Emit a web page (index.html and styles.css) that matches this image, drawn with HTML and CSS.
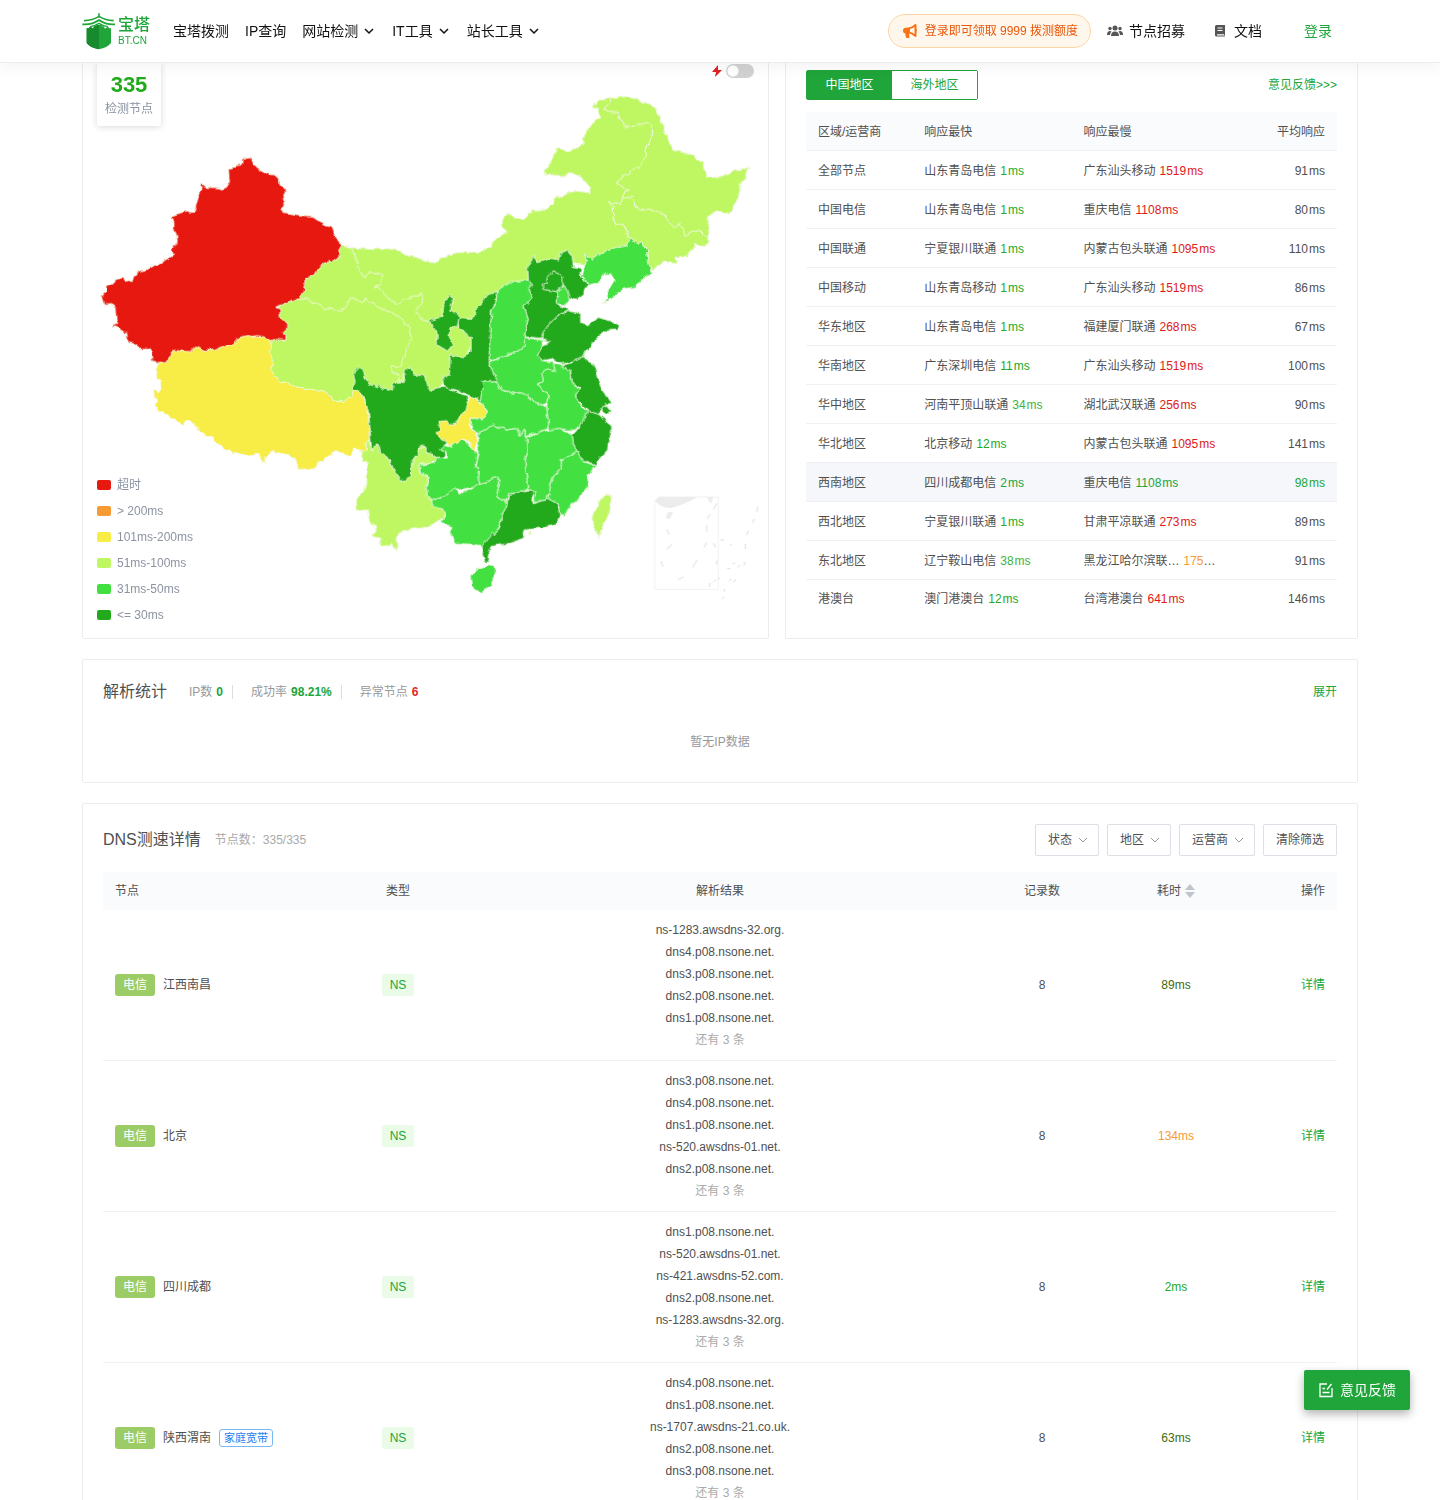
FILE: index.html
```html
<!DOCTYPE html>
<html lang="zh-CN">
<head>
<meta charset="utf-8">
<meta name="viewport" content="width=device-width, initial-scale=1">
<title>宝塔拨测 - DNS测速</title>
<link rel="stylesheet" href="styles.css">
</head>
<body>
<header class="header">
  <div class="header-inner">
    <a class="logo" href="#" aria-label="宝塔">
      <svg width="34" height="37" viewBox="36 38 102 111">
        <path d="M50 84h7v-3h8v3h6v-6h8v-4h16v4h8v6h6v-3h8v3h6V128Q112 142 87 147Q60 142 50 128Z" fill="#20a53a"/>
        <path d="M50 84h7v-3h8v3h6v-6h8v-4h8V147Q60 142 50 128Z" fill="#178a2d"/>
        <path d="M87 39V52M42 61Q68 60 87 48Q106 60 131 61M37 72Q66 74 87 59Q108 74 135 72" fill="none" stroke="#20a53a" stroke-width="5"/>
        <path d="M60 79Q75 77 87 69Q99 77 114 79" fill="none" stroke="#20a53a" stroke-width="4"/>
      </svg>
      <span class="logo-text"><b>宝塔</b><small>BT.CN</small></span>
    </a>
    <nav class="nav">
      <a href="#">宝塔拨测</a>
      <a href="#">IP查询</a>
      <a href="#">网站检测<svg class="chev" viewBox="0 0 10 10"><path d="M1 3l4 4 4-4"/></svg></a>
      <a href="#">IT工具<svg class="chev" viewBox="0 0 10 10"><path d="M1 3l4 4 4-4"/></svg></a>
      <a href="#">站长工具<svg class="chev" viewBox="0 0 10 10"><path d="M1 3l4 4 4-4"/></svg></a>
    </nav>
    <div class="actions">
      <a class="promo" href="#">
        <svg width="14" height="14" viewBox="0 0 14 14" fill="#f97316"><path fill-rule="evenodd" d="M12 0q1.500 0 1.500 1v4q1 1 0 3v4q-.5 1.500-2 .5Q9 10 6 9.500l.5 3.500q0 1-1 1H4q-1 0-1.200-1L2.300 9.500Q0 9 0 7V6q0-2 2.500-2.200Q9 3.500 12 0M7 5v3q3 .4 4.500 2V3Q9.500 4.700 7 5"/></svg>
        登录即可领取 9999 拨测额度
      </a>
      <a class="action" href="#">
        <svg width="16" height="14" viewBox="0 0 16 14" fill="#555"><circle cx="8" cy="4" r="2.500"/><circle cx="3" cy="4.500" r="1.700"/><circle cx="13" cy="4.500" r="1.700"/><path d="M4 12q0-4.500 4-4.500t4 4.500ZM0 11q0-4 3-4 1 0 1.500.5Q3 9 3 11ZM16 11q0-4-3-4-1 0-1.500.5Q13 9 13 11Z"/></svg>
        节点招募
      </a>
      <a class="action docs" href="#">
        <svg width="12" height="14" viewBox="0 0 12 14"><path d="M2.500 1H11v9.500q-1 1 0 2H2.500Q1 12.500 1 11V2.500Q1 1 2.500 1" fill="#555"/><path d="M3.500 4h5M3.500 6.500h5M3 10.800h7" stroke="#fff" stroke-width="1.200"/></svg>
        文档
      </a>
      <a class="login" href="#">登录</a>
    </div>
  </div>
</header>

<main class="main">
  <div class="overview">
    <section class="panel map-panel">
      <div class="count"><strong>335</strong><span>检测节点</span></div>
      <label class="fast" aria-label="极速模式">
        <svg width="10" height="12" viewBox="0 0 10 12"><path d="M6 0L0 7h4L3 12 10 5H6Z" fill="#e02020"/></svg>
        <input type="checkbox">
      </label>
      <svg class="map" viewBox="291 270 1998 1536" role="img" aria-label="中国地区响应速度">
        <defs>
          <filter id="rough" x="-2%" y="-2%" width="104%" height="104%" color-interpolation-filters="sRGB">
            <feTurbulence type="fractalNoise" baseFrequency=".05" numOctaves="2" seed="4"/>
            <feDisplacementMap in="SourceGraphic" scale="15" xChannelSelector="R" yChannelSelector="G"/>
          </filter>
        </defs>
        <g class="land" filter="url(#rough)">
          <path class="l4" d="M1025 736L1053 742 1110 748 1160 745 1200 753 1210 765 1240 770 1280 782 1300 788 1320 777 1370 758 1440 755 1472 740 1490 717 1520 697 1503 670 1515 643 1532 643 1540 653 1573 655 1605 630 1635 628 1657 613 1665 593 1690 587 1695 580 1730 573 1770 578 1768 560 1755 545 1745 530 1710 517 1690 530 1675 523 1642 527 1634 515 1642 505 1670 445 1705 452 1732 440 1752 433 1750 415 1755 400 1775 370 1798 352 1792 325 1775 320 1802 297 1825 295 1880 286 1895 292 1920 303 1950 312 1970 330 1980 355 1992 390 2010 425 2015 450 2075 462 2095 480 2110 490 2112 510 2125 533 2170 530 2190 515 2225 507 2248 502 2238 520 2238 537 2220 550 2218 580 2205 610 2188 642 2150 632 2122 652 2128 685 2128 713 2125 730 2110 740 2088 730 2082 745 2060 768 2028 772 2033 795 2000 790 1988 782 1970 807 1957 817 1940 780 1890 750 1780 800 1710 790 1500 900 1440 1000 1380 1100 1300 1180 1200 1200 1080 1250 900 1200 700 1100 850 900 900 850 980 780Z"/>
          <g transform="translate(270 960)">
            <path class="l3" d="M205 131L197 150 201 170 210 180 215 205 205 218 190 208 192 228 202 238 198 260 208 275 235 285 275 315 283 302 300 302 348 350 368 350 376 365 400 385 420 390 430 403 440 398 470 409 510 402 520 432 528 410 548 395 600 405 622 430 624 448 670 447 685 430 738 392 780 410 795 383 815 398 832 393 836 360 842 353 838 310 830 265 820 230 806 214 790 210 785 228 770 235 765 245 750 240 740 245 727 240 722 228 700 210 685 215 650 206 615 200 600 190 570 185 555 170 544 148 549 130 540 100 545 70 545 62 505 20 300 40Z"/>
          </g>
          <g transform="translate(270 420)">
            <path class="l1" d="M457 52L470 55 485 52 484 64 491 72 505 85 510 94 524 101 534 97 545 104 553 104 565 115 571 133 585 147 586 158 581 165 585 181 576 203 582 217 604 221 633 226 663 228 682 240 707 257 722 260 728 265 738 294 755 316 747 330 747 355 739 355 721 368 717 364 703 371 685 387 674 407 647 412 640 457 630 470 628 477 600 487 575 495 558 502 570 508 571 533 585 545 595 558 577 575 579 584 588 584 588 601 552 598 545 602 527 593 505 587 470 590 438 600 428 614 405 616 370 631 340 631 327 621 317 618 300 635 280 634 252 631 241 640 233 667 205 671 186 662 183 638 177 625 150 625 130 611 114 607 110 580 94 569 64 558 83 550 78 540 75 500 65 494 45 495 36 463 47 455 48 437 65 432 78 418 98 413 101 424 128 420 139 396 165 394 190 378 240 352 249 346 245 322 262 307 258 280 252 265 250 238 238 229 292 212 300 217 320 216 313 198 336 134 348 142 385 143 395 147 415 137 418 122 415 90 420 84 444 80 455 68Z"/>
          </g>
          <g transform="translate(1020 1200)">
            <path class="l4" d="M95 155L108 130 118 140 140 170 180 243 213 230 215 185 232 160 238 140 258 138 255 155 287 165 288 180 275 190 240 192 238 218 265 228 258 262 268 300 280 315 315 335 312 352 290 365 270 380 245 385 225 385 200 392 175 400 172 420 175 450 160 445 155 430 140 438 122 435 120 415 98 410 107 380 88 365 82 330 47 333 50 315 45 300 75 270 80 250 82 190 70 180 65 155 78 150 80 125 90 120Z"/>
            <path class="l5" d="M238 195L285 190 288 172 318 172 318 155 300 148 305 135 330 140 345 128 358 115 380 125 385 135 403 155 412 155 405 200 420 205 415 250 405 262 350 270 340 285 305 290 270 302 262 285 258 262 268 228 240 218Z"/>
            <path class="l5" d="M270 302L305 290 325 282 345 265 355 283 395 265 420 247 440 245 465 232 480 240 470 290 485 300 500 298 500 320 485 345 480 375 460 400 430 438 400 433 350 430 332 405 335 380 300 368 315 352 315 335 300 325 280 320Z"/>
            <path class="l5" d="M415 100L440 90 460 75 480 82 500 90 530 85 540 105 550 85 557 110 570 120 565 150 555 185 560 230 567 270 540 270 530 280 505 282 500 298 485 300 470 290 480 240 465 232 440 245 415 250 418 205 405 200 415 155Z"/>
            <path class="l5" d="M560 115L600 95 628 85 665 85 680 95 700 105 700 130 712 155 680 170 660 180 665 205 640 230 630 265 622 295 600 302 580 305 582 280 567 270 560 230 555 185 565 150Z"/>
            <path class="l5" d="M712 155L730 185 768 195 745 225 742 265 720 290 700 310 670 350 660 345 655 315 622 295 630 265 640 230 665 205 660 180 680 170Z"/>
            <path class="l6" d="M740 30L775 42 790 55 815 75 815 95 805 130 803 150 770 185 768 195 745 185 730 185 712 155 700 130 697 105 715 85 730 60Z"/>
            <path class="l6" d="M505 282L530 280 540 270 585 275 575 300 580 308 600 302 622 295 650 310 662 345 645 375 600 385 555 390 550 415 520 425 500 432 450 440 445 462 452 485 435 487 427 460 430 435 455 405 480 380 485 345 500 320Z"/>
            <path class="l5" d="M412 508L440 498 460 495 470 512 455 540 455 555 425 577 397 563 394 530Z"/>
            <path class="l4" d="M785 290L800 280 815 288 810 320 803 350 790 380 780 400 778 418 772 395 757 370 757 345 775 310Z"/>
            <circle class="l4" cx="567" cy="399" r="4"/>
          </g>
          <g transform="translate(1020 690)">
            <path class="l6" d="M40 428L55 412 70 420 75 440 85 460 110 470 115 465 125 475 140 480 157 478 160 458 190 455 195 425 210 408 220 430 255 440 258 462 275 478 300 472 325 472 345 485 380 500 388 520 380 580 320 640 300 658 318 665 310 682 288 682 280 675 255 665 255 648 238 650 232 670 215 695 213 740 205 748 180 753 165 730 155 705 140 680 122 670 118 650 108 640 95 665 90 600 85 545 75 510 65 490 40 480 38 465 45 455Z"/>
            <path class="l5" d="M422 455L470 455 485 480 525 490 550 487 570 505 590 520 605 525 620 530 622 550 628 590 600 605 560 620 550 597 540 615 530 595 500 600 480 592 460 585 440 600 415 610 408 605 390 580 390 565 430 565 442 545 430 520 420 512Z"/>
            <path class="l3" d="M388 498L412 512 430 520 442 545 430 565 390 565 390 590 408 605 413 640 405 665 395 655 385 635 368 625 355 640 340 640 325 650 320 635 300 625 288 608 300 598 297 575 320 572 330 585 350 578 360 560 375 540 385 520Z"/>
            <path class="l5" d="M447 397L500 375 530 365 552 350 553 322 605 330 608 345 592 375 608 392 640 395 650 400 645 425 620 420 610 440 610 455 595 462 608 480 625 490 620 520 605 525 590 520 550 487 525 490 485 480 465 450 450 415Z"/>
            <path class="l5" d="M605 430L620 420 645 425 640 400 660 405 690 420 697 455 710 475 725 475 707 490 710 510 730 535 742 545 730 575 705 600 680 600 660 595 628 600 622 550 620 530 625 490 608 480 595 462 610 455Z"/>
            <path class="l6" d="M660 405L680 402 700 395 725 375 740 388 762 405 770 435 780 465 790 485 812 515 800 520 795 530 775 553 745 542 710 510 707 490 725 475 710 470 697 455 690 420Z"/>
            <path class="l6" d="M785 535L800 528 815 548 800 555 787 548Z"/>
            <path class="l6" d="M470 187L468 215 455 245 450 300 450 390 447 400 470 455 425 455 430 470 420 515 385 497 345 480 310 470 307 440 328 435 330 375 370 380 393 365 393 320 355 295 355 262 400 265 410 235 440 195Z"/>
            <path class="l6" d="M325 195L340 205 332 240 358 258 352 290 330 290 328 320 338 345 322 363 292 345 290 305 265 272 305 260 307 230Z"/>
            <path class="l5" d="M470 187L510 155 545 152 570 150 578 165 565 178 578 200 552 230 565 265 553 320 553 350 530 365 500 375 447 395 450 300 455 245 468 215Z"/>
            <path class="l6" d="M565 150L562 105 585 78 590 98 635 85 655 90 660 68 685 60 697 80 700 110 725 115 720 130 745 165 730 190 708 208 690 200 680 220 655 225 685 240 650 260 625 285 607 325 553 320 565 265 552 230 578 200 565 178 578 165Z"/>
            <path class="l6" d="M640 125L668 140 668 165 650 185 612 178 610 165 622 160 620 145Z"/>
            <path class="l5" d="M670 160L685 190 688 210 680 225 652 222 652 180 665 180Z"/>
            <path class="l6" d="M605 330L607 310 625 285 650 260 685 242 722 250 722 275 745 288 775 262 800 270 835 280 832 297 800 300 770 325 745 355 728 382 700 395 665 402 640 385 608 392 592 375 610 345 628 333Z"/>
            <path class="edge" d="M33 52L52 95 48 105 70 140 85 132 115 127 128 140 122 165 100 172 125 180 140 200 175 222 200 205 245 190 252 210 228 240 240 265 265 275M-122 207L-100 203 -85 215 -60 220 -50 235 -20 238 0 245 15 235 25 220 28 200 60 215 80 207 120 235 150 245 185 265 205 290 215 325 195 370 182 410 150 407 160 430 180 435 175 450 185 453 193 430"/>
          </g>
          <g transform="translate(1470 255)">
            <path class="l5" d="M280 550L290 530 283 505 305 525 325 510 365 490 410 483 422 458 445 478 458 472 470 500 475 530 485 565 460 580 435 607 400 612 370 635 340 655 355 635 352 620 375 582 365 567 340 567 330 590 298 600 275 570Z"/>
            <path class="edge" d="M355 40L360 52 342 70 362 82 385 85 400 125 440 123 470 112 492 135 470 180 467 212 447 250 440 245 380 292 405 312 418 315 400 320 400 338 430 338 435 365 450 372 485 373 525 388 530 403 555 430 570 415 587 455 610 437 630 433 640 452 658 458M400 338L390 358 357 350 370 365 370 400 378 422 400 415 412 440 410 455 422 460"/>
          </g>
        </g>
        <g transform="translate(1920 1440)">
          <path d="M57 51H235V328H44V64Z" fill="none" stroke="#f1f1f1" stroke-width="3"/>
          <path d="M44 62L57 51H172Q130 75 95 84 65 85 44 62M200 51H220L212 72M83 97L99 95 90 118 77 115Z" fill="#ececec"/>
          <path d="M231 70L220 88M210 102L202 117M200 135V155M200 187L192 203M172 240L158 262M131 291L115 299M63 243L69 260M81 208L96 193M80 148L87 165" fill="none" stroke="#e8e8e8" stroke-width="4"/>
          <path d="M353 80L350 95M343 117L337 129M325 152L319 166M316 192V207M315 246L311 257M220 190L227 202M230 242V254M209 309V321M220 306L228 298M252 327L254 335M246 357L254 350M268 301L275 298M281 307L288 297M242 180H251M262 266H270M292 262L300 256M270 192L276 196M234 298L240 293M278 252L286 248" fill="none" stroke="#c5c9c9" stroke-width="2"/>
        </g>
      </svg>
      <ul class="legend">
        <li><i class="sw s1"></i>超时</li>
        <li><i class="sw s2"></i>&gt; 200ms</li>
        <li><i class="sw s3"></i>101ms-200ms</li>
        <li><i class="sw s4"></i>51ms-100ms</li>
        <li><i class="sw s5"></i>31ms-50ms</li>
        <li><i class="sw s6"></i>&lt;= 30ms</li>
      </ul>
    </section>

    <section class="panel region-panel">
      <div class="region-bar">
        <div class="tabs"><button class="on">中国地区</button><button>海外地区</button></div>
        <a href="#">意见反馈&gt;&gt;&gt;</a>
      </div>
      <table class="region">
        <thead><tr><th>区域/运营商</th><th>响应最快</th><th>响应最慢</th><th>平均响应</th></tr></thead>
        <tbody>
          <tr><td>全部节点</td><td>山东青岛电信<em class="g">1<i>ms</i></em></td><td>广东汕头移动<em class="r">1519<i>ms</i></em></td><td>91<i>ms</i></td></tr>
          <tr><td>中国电信</td><td>山东青岛电信<em class="g">1<i>ms</i></em></td><td>重庆电信<em class="r">1108<i>ms</i></em></td><td>80<i>ms</i></td></tr>
          <tr><td>中国联通</td><td>宁夏银川联通<em class="g">1<i>ms</i></em></td><td>内蒙古包头联通<em class="r">1095<i>ms</i></em></td><td>110<i>ms</i></td></tr>
          <tr><td>中国移动</td><td>山东青岛移动<em class="g">1<i>ms</i></em></td><td>广东汕头移动<em class="r">1519<i>ms</i></em></td><td>86<i>ms</i></td></tr>
          <tr><td>华东地区</td><td>山东青岛电信<em class="g">1<i>ms</i></em></td><td>福建厦门联通<em class="r">268<i>ms</i></em></td><td>67<i>ms</i></td></tr>
          <tr><td>华南地区</td><td>广东深圳电信<em class="g">11<i>ms</i></em></td><td>广东汕头移动<em class="r">1519<i>ms</i></em></td><td>100<i>ms</i></td></tr>
          <tr><td>华中地区</td><td>河南平顶山联通<em class="m">34<i>ms</i></em></td><td>湖北武汉联通<em class="r">256<i>ms</i></em></td><td>90<i>ms</i></td></tr>
          <tr><td>华北地区</td><td>北京移动<em class="g">12<i>ms</i></em></td><td>内蒙古包头联通<em class="r">1095<i>ms</i></em></td><td>141<i>ms</i></td></tr>
          <tr class="hover"><td>西南地区</td><td>四川成都电信<em>2<i>ms</i></em></td><td>重庆电信<em>1108<i>ms</i></em></td><td><em>98<i>ms</i></em></td></tr>
          <tr><td>西北地区</td><td>宁夏银川联通<em class="g">1<i>ms</i></em></td><td>甘肃平凉联通<em class="r">273<i>ms</i></em></td><td>89<i>ms</i></td></tr>
          <tr><td>东北地区</td><td>辽宁鞍山电信<em class="m">38<i>ms</i></em></td><td>黑龙江哈尔滨联…<em class="o">175</em>…</td><td>91<i>ms</i></td></tr>
          <tr><td>港澳台</td><td>澳门港澳台<em class="g">12<i>ms</i></em></td><td>台湾港澳台<em class="r">641<i>ms</i></em></td><td>146<i>ms</i></td></tr>
        </tbody>
      </table>
    </section>
  </div>

  <section class="panel stats">
    <div class="head">
      <h2>解析统计</h2>
      <ul class="facts">
        <li>IP数<b>0</b></li>
        <li>成功率<b>98.21%</b></li>
        <li>异常节点<b class="bad">6</b></li>
      </ul>
      <a href="#">展开</a>
    </div>
    <p class="empty">暂无IP数据</p>
  </section>

  <section class="panel detail">
    <div class="head">
      <h2>DNS测速详情</h2>
      <span class="sub">节点数：335/335</span>
      <div class="filters">
        <button>状态<svg viewBox="0 0 10 10"><path d="M1 3l4 4 4-4"/></svg></button>
        <button>地区<svg viewBox="0 0 10 10"><path d="M1 3l4 4 4-4"/></svg></button>
        <button>运营商<svg viewBox="0 0 10 10"><path d="M1 3l4 4 4-4"/></svg></button>
        <button>清除筛选</button>
      </div>
    </div>
    <table class="dns">
      <colgroup><col class="c-node"><col class="c-type"><col><col class="c-type"><col class="c-time"><col class="c-op"></colgroup>
      <thead><tr><th>节点</th><th>类型</th><th>解析结果</th><th>记录数</th><th><span class="sort">耗时<svg width="10" height="14" viewBox="0 0 10 14" fill="#c0c4cc"><path d="M5 0l5 6H0ZM5 14L0 8h10Z"/></svg></span></th><th>操作</th></tr></thead>
      <tbody>
        <tr>
          <td><span class="isp">电信</span>江西南昌</td><td><span class="type">NS</span></td>
          <td><ul><li>ns-1283.awsdns-32.org.</li><li>dns4.p08.nsone.net.</li><li>dns3.p08.nsone.net.</li><li>dns2.p08.nsone.net.</li><li>dns1.p08.nsone.net.</li><li class="more">还有 3 条</li></ul></td>
          <td>8</td><td class="t-olive">89ms</td><td><a href="#">详情</a></td>
        </tr>
        <tr>
          <td><span class="isp">电信</span>北京</td><td><span class="type">NS</span></td>
          <td><ul><li>dns3.p08.nsone.net.</li><li>dns4.p08.nsone.net.</li><li>dns1.p08.nsone.net.</li><li>ns-520.awsdns-01.net.</li><li>dns2.p08.nsone.net.</li><li class="more">还有 3 条</li></ul></td>
          <td>8</td><td class="t-orange">134ms</td><td><a href="#">详情</a></td>
        </tr>
        <tr>
          <td><span class="isp">电信</span>四川成都</td><td><span class="type">NS</span></td>
          <td><ul><li>dns1.p08.nsone.net.</li><li>ns-520.awsdns-01.net.</li><li>ns-421.awsdns-52.com.</li><li>dns2.p08.nsone.net.</li><li>ns-1283.awsdns-32.org.</li><li class="more">还有 3 条</li></ul></td>
          <td>8</td><td class="t-green">2ms</td><td><a href="#">详情</a></td>
        </tr>
        <tr>
          <td><span class="isp">电信</span>陕西渭南<span class="home">家庭宽带</span></td><td><span class="type">NS</span></td>
          <td><ul><li>dns4.p08.nsone.net.</li><li>dns1.p08.nsone.net.</li><li>ns-1707.awsdns-21.co.uk.</li><li>dns2.p08.nsone.net.</li><li>dns3.p08.nsone.net.</li><li class="more">还有 3 条</li></ul></td>
          <td>8</td><td class="t-olive">63ms</td><td><a href="#">详情</a></td>
        </tr>
      </tbody>
    </table>
  </section>
</main>

<button class="feedback">
  <svg width="14" height="16" viewBox="0 0 14 16" fill="none" stroke="#fff" stroke-width="1.300"><path d="M8 2H1v12.500h12V6M3.500 6.500H6M3.500 10.500h7M12.500 2L8 7.500"/></svg>
  意见反馈
</button>
</body>
</html>
```
FILE: styles.css
```css
* { box-sizing: border-box; }
body {
  margin: 0;
  background: #fff;
  color: #505050;
  font: 12px/20px "Liberation Sans", "Noto Sans CJK SC", sans-serif;
}
a { color: #20a53a; text-decoration: none; }
button { font: inherit; cursor: pointer; }
ul { list-style: none; margin: 0; padding: 0; }
h2 { margin: 0; font-size: 16px; font-weight: 400; line-height: 24px; }
table { width: 100%; border-collapse: separate; border-spacing: 0; table-layout: fixed; }

.header {
  position: fixed;
  z-index: 10;
  top: 0;
  left: 0;
  right: 0;
  background: #fff;
  border-bottom: 1px solid #ececec;
  box-shadow: 0 4px 16px rgba(0, 0, 0, .05);
}
.header-inner {
  display: flex;
  align-items: center;
  max-width: 1276px;
  height: 62px;
  margin: 0 auto;
}
.logo { display: flex; align-items: center; gap: 2px; }
.logo-text { display: flex; flex-direction: column; width: 32px; padding-top: 2px; }
.logo b { font-size: 16px; line-height: 18px; font-weight: 500; }
.logo small { font-size: 10px; line-height: 14px; }
.nav { display: flex; gap: 16px; margin-left: 23px; font-size: 14px; }
.nav a, .action { display: flex; align-items: center; color: #111; }
.chev { width: 10px; height: 10px; margin: 0 2px 0 6px; fill: none; stroke: #111; stroke-width: 1.5; }
.actions { display: flex; align-items: center; margin-left: auto; margin-right: 26px; font-size: 14px; }
.promo {
  display: flex;
  align-items: center;
  gap: 8px;
  height: 34px;
  padding: 0 12px 0 14px;
  border: 1px solid #fdd5a5;
  border-radius: 17px;
  background: #fff7ec;
  color: #ea580c;
  font-size: 12px;
}
.action { gap: 6px; margin-left: 16px; }
.docs { gap: 8px; margin-left: 29px; }
.login { margin-left: 42px; }

.main { max-width: 1276px; margin: 0 auto; padding-top: 50px; }
.panel { border: 1px solid #ececec; border-radius: 2px; background: #fff; }
.overview { display: grid; grid-template-columns: 687fr 573fr; gap: 16px; }

.map-panel { position: relative; padding: 39px 5px 36px 14px; }
.map { display: block; width: 100%; }
.land path, .land circle { stroke: #f4f8e8; stroke-width: 3; stroke-linejoin: round; }
.land .edge { fill: none; }
.l1 { fill: #e7180f; }
.l3 { fill: #f7ed46; }
.l4 { fill: #bef761; }
.l5 { fill: #42e040; }
.l6 { fill: #22aa1c; }
.count {
  position: absolute;
  z-index: 1;
  top: 11px;
  left: 14px;
  display: flex;
  flex-direction: column;
  width: 64px;
  height: 64px;
  padding-top: 10px;
  border-radius: 2px;
  background: #fff;
  box-shadow: 0 1px 6px rgba(0, 0, 0, .15);
  color: #8b93a1;
  line-height: 22px;
  text-align: center;
}
.count strong { color: #22aa1c; font-size: 22px; line-height: 26px; }
.fast { position: absolute; z-index: 1; top: 13px; right: 14px; display: flex; align-items: center; gap: 4px; }
.fast input {
  appearance: none;
  width: 28px;
  height: 14px;
  margin: 0;
  border-radius: 7px;
  background: radial-gradient(circle at 7px 7px, #fff 5px, #d2d2d2 6px);
}
.legend { position: absolute; left: 14px; bottom: 10px; color: #8b93a1; }
.legend li { display: flex; align-items: center; gap: 6px; height: 26px; }
.sw { width: 14px; height: 10px; border-radius: 2px; }
.s1 { background: #e7180f; }
.s2 { background: #f79a33; }
.s3 { background: #f7ed46; }
.s4 { background: #bef761; }
.s5 { background: #42e040; }
.s6 { background: #22aa1c; }

.region-panel { padding: 19px 20px; }
.region-bar { display: flex; align-items: center; justify-content: space-between; margin-bottom: 12px; }
.tabs { display: flex; border: 1px solid #20a53a; border-radius: 2px; }
.tabs button { width: 85px; height: 28px; padding: 0; border: 0; background: #fff; color: #20a53a; }
.tabs .on { background: #20a53a; color: #fff; }
.region th, .region td { height: 39px; padding: 1px 12px 0; border-bottom: 1px solid #f0f1f4; text-align: left; white-space: nowrap; font-weight: 400; }
.region th { background: #fafbfd; }
.region th:nth-child(1) { width: 20%; }
.region th:nth-child(2), .region th:nth-child(3) { width: 30%; }
.region th:last-child, .region td:last-child { text-align: right; }
.region tbody tr:last-child td { height: 37px; border-bottom: 0; }
.region em { margin-left: 4px; color: #20a53a; font-style: normal; }
.region i { margin-left: 1px; font-style: normal; }
.region .g { color: #22aa1c; }
.region .m { color: #3cb43c; }
.region .r { color: #e01818; }
.region .o { color: #f79a33; }
.hover td { background: #f5f7fa; }

.stats, .detail { margin-top: 20px; padding: 20px; }
.head { display: flex; align-items: center; }
.head > a, .filters { margin-left: auto; }
.facts { display: flex; margin-left: 22px; color: #999; line-height: 14px; }
.facts li { display: flex; gap: 4px; padding-right: 9px; margin-right: 18px; border-right: 1px solid #ddd; }
.facts li:last-child { border: 0; }
.facts b { color: #20a53a; }
.facts .bad { color: #e02828; }
.empty { margin: 28px 0 10px; color: #999; text-align: center; }

.sub { margin-left: 14px; color: #aaa; font-family: "Liberation Sans", "Noto Sans CJK TC", sans-serif; }
.filters { display: flex; gap: 8px; }
.filters button {
  display: flex;
  align-items: center;
  gap: 6px;
  height: 32px;
  padding: 0 12px;
  border: 1px solid #dcdfe6;
  border-radius: 2px;
  background: #fff;
  color: #505050;
}
.filters svg { width: 10px; height: 10px; margin-right: -2px; fill: none; stroke: #999; }
.dns { margin-top: 16px; }
.dns th, .dns td { padding: 0 12px; text-align: center; font-weight: 400; }
.dns th { height: 38px; background: #fafbfd; }
.dns td { padding: 9px 12px; border-bottom: 1px solid #f0f1f4; }
.dns th:first-child, .dns td:first-child { text-align: left; }
.dns th:last-child, .dns td:last-child { text-align: right; }
.c-node { width: 227px; }
.c-type { width: 136px; }
.c-time { width: 132px; }
.c-op { width: 95px; }
.dns li { line-height: 22px; }
.more { color: #aaa; }
.sort { display: inline-flex; align-items: center; gap: 4px; }
.isp { display: inline-block; margin-right: 8px; padding: 1px 8px; border-radius: 3px; background: #9ccc65; color: #fff; }
.type { display: inline-block; padding: 1px 8px; border-radius: 3px; background: #eafbe8; color: #20a53a; }
.home { display: inline-block; margin-left: 8px; padding: 0 4px; border: 1px solid #7ab8f5; border-radius: 3px; color: #1e80f0; font-size: 11px; line-height: 16px; }
.dns .t-olive { color: #3f6b0c; }
.dns .t-orange { color: #f79a33; }
.dns .t-green { color: #22aa1c; }

.feedback {
  position: fixed;
  right: 30px;
  bottom: 90px;
  display: flex;
  align-items: center;
  gap: 7px;
  height: 40px;
  padding: 0 14px 0 15px;
  border: 0;
  border-radius: 2px;
  background: #20a53a;
  box-shadow: 0 4px 10px rgba(0, 0, 0, .3);
  color: #fff;
  font-size: 14px;
}
```
